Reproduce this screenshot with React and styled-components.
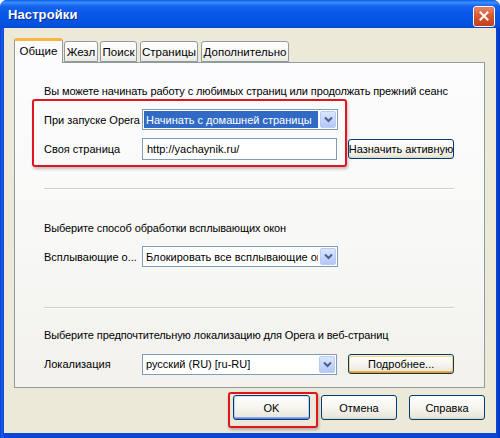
import React from 'react';
import styled, { createGlobalStyle } from 'styled-components';

const Global = createGlobalStyle`
  html, body { margin: 0; padding: 0; background: #ffffff; }
  body { font-family: "Liberation Sans", Arial, sans-serif; font-size: 11px; color: #000; }
`;

const Window = styled.div`
  width: 500px;
  height: 438px;
  box-sizing: border-box;
  display: flex;
  flex-direction: column;
  background: linear-gradient(90deg, #0a3fd0 0px, #1d5ee8 2px, #0a46d8 4px, #0a46d8 496px, #0834c0 500px);
  border-radius: 7px 7px 0 0;
  overflow: hidden;
`;

const TitleBar = styled.div`
  height: 28px;
  flex: none;
  display: flex;
  align-items: center;
  justify-content: space-between;
  padding: 0 5px 0 8px;
  background: linear-gradient(180deg, #0a5ff0 0%, #3c8ef9 9%, #1464f0 22%, #0a58e8 45%, #0654e4 75%, #0550dc 92%, #0646cc 100%);
`;

const Title = styled.span`
  color: #ffffff;
  font-weight: bold;
  font-size: 13px;
  letter-spacing: 0.1px;
  text-shadow: 1px 1px 0 #0a2a8c;
`;

const CloseButton = styled.div`
  width: 20px;
  height: 19px;
  margin-top: 4px;
  border: 1px solid #ffffff;
  border-radius: 3px;
  background: linear-gradient(180deg, #e8876a 0%, #d85a36 45%, #c6401c 100%);
  display: flex;
  align-items: center;
  justify-content: center;
  box-shadow: inset 0 0 1px #8a2a10;
`;

const Body = styled.div`
  flex: 1;
  margin: 0 4px 5px 4px;
  background: #ece9d8;
  padding: 10px 11px 0 10px;
  display: flex;
  flex-direction: column;
`;

const TabRow = styled.div`
  display: flex;
  align-items: flex-end;
  height: 24px;
  position: relative;
  z-index: 2;
`;

const Tab = styled.div`
  box-sizing: border-box;
  width: ${p => p.w}px;
  height: ${p => (p.active ? 25 : 21)}px;
  margin-left: ${p => p.gap}px;
  margin-bottom: ${p => (p.active ? -1 : 0)}px;
  border: 1px solid #919b9c;
  border-bottom: ${p => (p.active ? 'none' : '1px solid #919b9c')};
  border-top: ${p => (p.active ? '3px solid #f7b544' : '1px solid #919b9c')};
  border-radius: 3px 3px 0 0;
  background: ${p => (p.active ? '#fcfcfe' : 'linear-gradient(180deg, #ffffff 0%, #f6f6f3 60%, #e9e8e2 100%)')};
  display: flex;
  align-items: center;
  justify-content: center;
  padding-bottom: ${p => (p.active ? 2 : 0)}px;
  font-size: 11.5px;
  color: #000;
`;

const Panel = styled.div`
  position: relative;
  box-sizing: border-box;
  height: 326px;
  border: 1px solid #919b9c;
  background: linear-gradient(180deg, #fcfcfe 0%, #f8f8f6 55%, #f2f1ec 100%);
  padding: 0 30px 0 29px;
  display: flex;
  flex-direction: column;
`;

const Heading = styled.div`
  line-height: 14px;
  height: 14px;
  margin-top: ${p => p.top}px;
  white-space: nowrap;
  letter-spacing: -0.12px;
`;

const Row = styled.div`
  display: flex;
  align-items: center;
  margin-top: ${p => p.top}px;
  height: ${p => p.h}px;
`;

const Label = styled.div`
  width: 98px;
  flex: none;
  white-space: nowrap;
`;

const Combo = styled.div`
  box-sizing: border-box;
  width: 196px;
  height: 21px;
  border: 1px solid #7f9db9;
  background: #ffffff;
  display: flex;
  align-items: stretch;
  padding: 1px;
`;

const ComboValue = styled.div`
  flex: 1;
  display: flex;
  align-items: center;
  padding-left: 2px;
  overflow: hidden;
  white-space: nowrap;
  background: ${p => (p.selected ? '#316ac5' : 'transparent')};
  color: ${p => (p.selected ? '#ffffff' : '#000000')};
  margin-right: 2px;
`;

const ComboArrow = styled.div`
  width: 16px;
  flex: none;
  box-sizing: border-box;
  border: 1px solid #b9cbf3;
  border-radius: 2px;
  background: linear-gradient(180deg, #dbe6fd 0%, #c6d6fc 50%, #b3c8f7 100%);
  display: flex;
  align-items: center;
  justify-content: center;
`;

const TextInput = styled.div`
  box-sizing: border-box;
  width: 196px;
  height: 22px;
  border: 1px solid #7f9db9;
  background: #ffffff;
  display: flex;
  align-items: center;
  padding-left: 4px;
`;

const Button = styled.div`
  box-sizing: border-box;
  width: ${p => p.w}px;
  height: ${p => p.h}px;
  margin-left: ${p => p.gap || 0}px;
  border: 1px solid #003c74;
  border-radius: 3px;
  background: linear-gradient(180deg, #ffffff 0%, #f6f5f0 50%, #ebe8dc 90%, #d8d4c4 100%);
  box-shadow: ${p =>
    p.hot
      ? 'inset 0 1px 0 #ffecb8, inset 0 -1px 0 #e59a1a, inset 1px 0 0 #fbd46e, inset -1px 0 0 #fbd46e, inset 0 2px 0 #fcd77a, inset 0 -2px 0 #f8b330'
      : p.def
      ? 'inset 0 1px 0 #cee7ff, inset 0 -1px 0 #6982ee, inset 1px 0 0 #b9d1fa, inset -1px 0 0 #b9d1fa, inset 0 -2px 0 #8fa8f3'
      : 'none'};
  display: flex;
  align-items: center;
  justify-content: center;
  white-space: nowrap;
  overflow: visible;
  font-weight: normal;
  color: #000;
`;

const Separator = styled.div`
  margin-top: ${p => p.top}px;
  height: 1px;
  background: #d0d0bf;
  border-bottom: 1px solid #ffffff;
`;

const Highlight = styled.div`
  position: absolute;
  box-sizing: border-box;
  border: 2px solid #e0151e;
  border-radius: 3px;
  box-shadow: 1px 2px 3px rgba(0, 0, 0, 0.25);
  pointer-events: none;
  left: ${p => p.l}px;
  top: ${p => p.t}px;
  width: ${p => p.w}px;
  height: ${p => p.h}px;
`;

const Footer = styled.div`
  display: flex;
  justify-content: flex-end;
  margin-top: 7px;
`;

const ButtonWrap = styled.div`
  position: relative;
  margin-left: ${p => p.gap}px;
`;

const Chevron = () => (
  <svg width="9" height="7" viewBox="0 0 9 7">
    <polyline points="1,1.5 4.5,5 8,1.5" fill="none" stroke="#4d6185" strokeWidth="2" />
  </svg>
);

const Select = ({ children, selected }) => (
  <Combo>
    <ComboValue selected={selected}>{children}</ComboValue>
    <ComboArrow>
      <Chevron />
    </ComboArrow>
  </Combo>
);

const App = () => (
  <>
    <Global />
    <Window>
      <TitleBar>
        <Title>Настройки</Title>
        <CloseButton>
          <svg width="10" height="10" viewBox="0 0 10 10">
            <path d="M1.5 1.5 L8.5 8.5 M8.5 1.5 L1.5 8.5" stroke="#fff" strokeWidth="2" strokeLinecap="square" />
          </svg>
        </CloseButton>
      </TitleBar>
      <Body>
        <TabRow>
          <Tab active w={49} gap={0}>Общие</Tab>
          <Tab w={34} gap={1}>Жезл</Tab>
          <Tab w={37} gap={2}>Поиск</Tab>
          <Tab w={58} gap={3}>Страницы</Tab>
          <Tab w={88} gap={3}>Дополнительно</Tab>
        </TabRow>
        <Panel>
          <Heading top={21}>Вы можете начинать работу с любимых страниц или продолжать прежний сеанс</Heading>
          <Row top={11} h={21}>
            <Label>При запуске Opera</Label>
            <Select selected>Начинать с домашней страницы</Select>
          </Row>
          <Row top={8} h={22}>
            <Label>Своя страница</Label>
            <TextInput>http://yachaynik.ru/</TextInput>
            <Button w={106} h={20} gap={11}>Назначить активную</Button>
          </Row>
          <Separator top={28} />
          <Heading top={31}>Выберите способ обработки всплывающих окон</Heading>
          <Row top={11} h={21}>
            <Label>Всплывающие о...</Label>
            <Select>Блокировать все всплывающие окна</Select>
          </Row>
          <Separator top={40} />
          <Heading top={19}>Выберите предпочтительную локализацию для Opera и веб-страниц</Heading>
          <Row top={11} h={22}>
            <Label>Локализация</Label>
            <Select>русский (RU) [ru-RU]</Select>
            <Button w={106} h={20} gap={11} hot>Подробнее...</Button>
          </Row>
          <Highlight l={17} t={36} w={315} h={68} />
        </Panel>
        <Footer>
          <ButtonWrap gap={0}>
            <Button w={77} h={25} def>OK</Button>
            <Highlight l={-5} t={-3} w={90} h={36} />
          </ButtonWrap>
          <ButtonWrap gap={11}>
            <Button w={76} h={25}>Отмена</Button>
          </ButtonWrap>
          <ButtonWrap gap={12}>
            <Button w={76} h={25}>Справка</Button>
          </ButtonWrap>
        </Footer>
      </Body>
    </Window>
  </>
);

export default App;
